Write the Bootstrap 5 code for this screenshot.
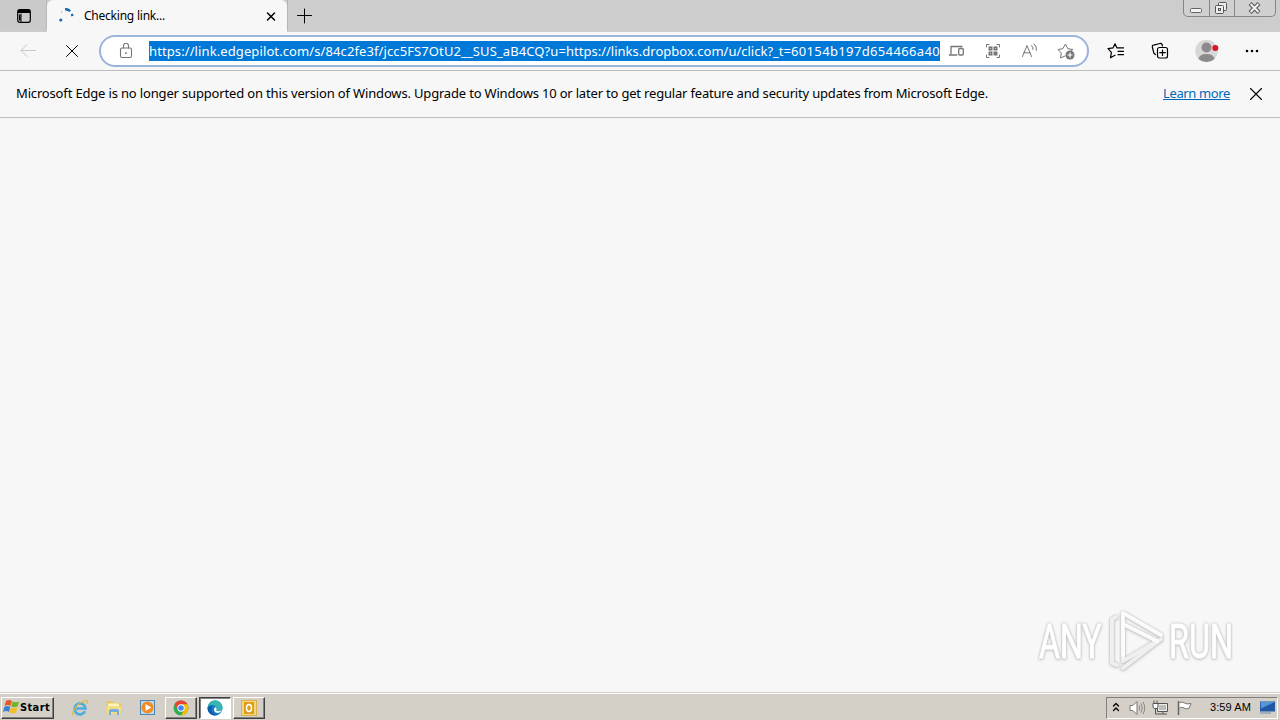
<!DOCTYPE html>
<html lang="en" data-bs-theme="light">
<head>
<meta charset="UTF-8">
<title>Checking link...</title>
<meta name="viewport" content="width=device-width, initial-scale=1.0">
<link href="https://cdn.jsdelivr.net/npm/bootstrap@5.3.2/dist/css/bootstrap.min.css" rel="stylesheet">
<style>
  html, body {height: 100%;}
  body {background: #f7f7f7;font-family: "Noto Sans", "Open Sans", sans-serif;font-size: 13px;line-height: 18px;color: #000;overflow: hidden;}
  svg {display: block;flex: none;}
  .ln {fill: none;stroke: currentColor;stroke-linecap: round;stroke-linejoin: round;}

  /* Tab strip */
  .tab-strip {height: 32px;background: #cdcdcd;}
  .tab-menu {width: 47px;height: 31px;padding-left: 16px;background: #cacaca;border-right: 1px solid #b9b9b9;border-bottom-right-radius: 5px;}
  .page-tab {width: 240px;height: 32px;padding: 0 9px 0 10px;background: #f7f7f7;border-radius: 6px 6px 0 0;}
  .tab-title {font-size: 12px;width: 181px;margin-left: 9px;}
  .tab-add {border-left: 1px solid #b5b5b5;padding: 0 9px;height: 31px;}
  .win-buttons {height: 17px;border: 1px solid #858585;border-top: 0;border-radius: 0 0 5px 5px;margin-right: 4px;background: #d0d0d0;overflow: hidden;}
  .win-buttons > div {height: 16px;border-right: 1px solid #858585;}
  .win-buttons > div:last-child {border-right: 0;}

  /* Toolbar */
  .tool-bar {height: 39px;border-bottom: 1px solid #bdbdbd;background: #f7f7f7;}
  .address {width: 990px;height: 32px;margin-left: 20px;padding-left: 18px;border: 2px solid #9bb4dc;border-radius: 16px;background: #fff;color: #757575;}
  .address-url {width: 791px;height: 20px;margin-left: 16px;background: #0078d7;color: #fff;line-height: 20px;}

  /* Notice */
  .notice {height: 47px;padding: 0 17px 0 16px;border-bottom: 1px solid #bdbdbd;background: #f7f7f7;}
  .notice-text {padding-bottom: 2px;}
  .notice a {color: #0067b8;}

  .mark-logo {position: absolute;right: 36px;bottom: 46px;overflow: visible;}
  .mark-logo g {filter: drop-shadow(0 0 1px #bbb) drop-shadow(0 1px 1px #d0d0d0);}

  /* Taskbar */
  .task-bar {height: 28px;background: #d4d0c8;border-top: 1px solid #d4d0c8;box-shadow: inset 0 1px #fff;padding: 2px 2px 0 1px;}
  .raised {border: 1px solid;border-color: #fff #404040 #404040 #fff;box-shadow: inset -1px -1px #808080;background: #d4d0c8;}
  .start {width: 53px;height: 22px;font: bold 11px/19px "DejaVu Sans Condensed", "DejaVu Sans", sans-serif;padding-left: 1px;}
  .task {width: 32px;height: 22px;}
  .task.pressed {border-color: #404040 #fff #fff #404040;box-shadow: inset 1px 1px #808080;background: #fff;}
  .tray {width: 172px;height: 22px;border: 1px solid;border-color: #808080 #fff #fff #808080;font: 11px/19px "Liberation Sans", sans-serif;padding-left: 5px;}
</style>
</head>
<body>
<div class="d-flex flex-column vh-100">

  <div class="tab-strip d-flex">
    <div class="tab-menu d-flex align-items-center">
      <svg width="16" height="16" viewBox="0 0 16 16"><rect class="ln" x="1.700" y="1.700" width="12.600" height="12.600" rx="2" stroke-width="1.200"/><path d="M2 2h12v3H2zM3 6.500h1.500v6H3z"/><path class="ln" d="M5 6v8"/></svg>
    </div>
    <div class="page-tab d-flex align-items-center">
      <svg width="18" height="18" viewBox="0 0 18 18"><path d="M8 2.300q3-.3 5.200 1.800" fill="none" stroke="#1667b0" stroke-width="2.300"/><path d="M14.800 6.800l.7 2.300" stroke="#1667b0" stroke-width="2.300"/><circle cx="3.800" cy="13" r="1.600" fill="#1667b0"/><circle cx="4.700" cy="5" r=".7" fill="#83aad0"/></svg>
      <span class="tab-title"><span data-width="81">Checking link...</span></span>
      <svg width="12" height="12" viewBox="0 0 12 12"><path class="ln" d="M2.500 3l7 7m0-7l-7 7" stroke-width="1.500"/></svg>
    </div>
    <div class="tab-add d-flex align-items-center">
      <svg width="16" height="16" viewBox="0 0 16 16"><path class="ln" d="M7.500 1v14M.5 7.500h14"/></svg>
    </div>
    <div class="win-buttons d-flex ms-auto">
      <div style="width:26px"><svg width="25" height="16"><rect x="6.500" y="8.500" width="11" height="4" rx="1" fill="#f3f3f3" stroke="#666"/></svg></div>
      <div style="width:25px"><svg width="24" height="16"><g fill="#eee" stroke="#555"><rect x="8.500" y="2.500" width="8" height="8" rx="1"/><rect x="5.500" y="5.500" width="8" height="8" rx="1"/><rect x="8.500" y="8.500" width="2" height="2"/></g></svg></div>
      <div style="width:40px"><svg width="40" height="16"><path d="M15 3.500l9 9m0-9l-9 9" stroke="#555" stroke-width="4"/><path d="M15.500 4l8 8m0-8l-8 8" stroke="#f2f2f2" stroke-width="2"/></svg></div>
    </div>
  </div>

  <div class="tool-bar d-flex align-items-center">
    <svg width="18" height="16" viewBox="0 0 18 16" style="margin-left:19px;color:#c8c8c8"><path class="ln" d="M16.500 7.500H2M8 1.500l-6 6 6 6"/></svg>
    <svg width="14" height="14" viewBox="0 0 14 14" style="margin-left:28px"><path class="ln" d="M1.500 1.500l11 11m0-11l-11 11"/></svg>
    <div class="address d-flex align-items-center">
      <svg width="14" height="16" viewBox="0 0 14 16"><g class="ln" stroke-width="1.100"><rect x="1.500" y="5" width="11" height="9.500" rx="1.500"/><path d="M4.500 5V2.800a2.500 2.500 0 0 1 5 0V5"/></g><circle cx="7" cy="10" r=".9" fill="currentColor"/></svg>
      <div class="address-url text-nowrap"><span data-width="417">https://link.edgepilot.com/s/84c2fe3f/jcc5FS7OtU2__SUS_aB4CQ?u=</span><span data-width="225">https://links.dropbox.com/u/click?_t=</span><span data-width="149">60154b197d654466a40</span></div>
      <svg width="17" height="14" viewBox="0 0 17 14" style="margin-left:8px"><g class="ln" stroke-width="1.300"><path d="M3 9.500v-7h11M1.300 11h7.500"/><rect x="10.700" y="4.500" width="4.600" height="6.500" rx="1"/></g></svg>
      <svg width="16" height="16" viewBox="0 0 16 16" style="margin-left:20px"><path class="ln" d="M1.500 4V1.500H4m8 0h2.500V4m0 8v2.500H12m-8 0H1.500V12"/><path d="M3.500 3.500h4v4h-4zM8.500 3.500h4v4h-4zM3.500 8.500h4v4h-4zM8.500 8.500h4v4h-4z" fill="currentColor"/><path d="M5 5h.8v.8H5zM10 5h.8v.8h-.8zM5 10h.8v.8H5z" fill="#fff"/></svg>
      <svg width="18" height="16" viewBox="0 0 18 16" style="margin-left:20px"><path class="ln" d="M1.500 13.500L6 2.500l4.500 11M3 9.800h6M10.500 2.500q1.800 1.500 1.500 4M13 .8q3 2.500 2.500 6.500"/></svg>
      <svg width="19" height="18" viewBox="0 0 19 18" style="margin-left:18px"><path class="ln" d="M8 14L3.500 16l.8-5L1 7.500l4.800-.8L8.500 2l2.300 4.700 5 .8-1.600 1.500"/><circle cx="13" cy="13" r="4.500" fill="currentColor"/><path d="M10.500 13h5M13 10.500v5" stroke="#fff" stroke-width="1.200"/></svg>
    </div>
    <svg width="18" height="16" viewBox="0 0 18 16" style="margin-left:18px"><path class="ln" d="M8 12.300L3.500 14.800l.9-5.500L1 5.700l5-.8L8 .8l2 4.100h6.500M11 8.300h5.500M11 11.700h5.500" stroke-width="1.200"/></svg>
    <svg width="18" height="18" viewBox="0 0 18 18" style="margin-left:26px"><g class="ln" stroke-width="1.200"><path d="M4.500 12.500l-1.500-1L1.300 5Q1 3.500 2.500 3.200L9 1.500q1.500-.3 2 1l.5 1.500"/><rect x="6.500" y="5.500" width="10" height="10.500" rx="2"/><path d="M11.500 8v5.500M8.800 10.700h5.500"/></g></svg>
    <svg width="24" height="24" viewBox="0 0 24 24" style="margin-left:26px"><circle cx="11.500" cy="12" r="11.300" fill="#d7d7d7"/><circle cx="11.500" cy="8.500" r="5" fill="#8c8a8a"/><path d="M3.500 20q1-5 8-5t8 5q-3.500 3-8 3t-8-3z" fill="#8c8a8a"/><circle cx="20.300" cy="9" r="3" fill="#dc1420"/></svg>
    <svg width="14" height="4" viewBox="0 0 14 4" style="margin-left:26px"><circle cx="2" cy="2" r="1.300"/><circle cx="7" cy="2" r="1.300"/><circle cx="12" cy="2" r="1.300"/></svg>
  </div>

  <div class="notice d-flex align-items-center text-nowrap">
    <span class="notice-text"><span data-width="398">Microsoft Edge is no longer supported on this version of Windows. </span><span data-width="574">Upgrade to Windows 10 or later to get regular feature and security updates from Microsoft Edge.</span></span>
    <a class="notice-text ms-auto" href="#"><span data-width="67">Learn more</span></a>
    <svg width="14" height="14" viewBox="0 0 14 14" style="margin-left:19px"><path class="ln" d="M1.500 1.500l11 11m0-11l-11 11" stroke-width="1.100"/></svg>
  </div>

  <main class="flex-grow-1"></main>

  <div class="task-bar d-flex align-items-center">
    <div class="start raised d-flex">
      <svg width="17" height="18" viewBox="0 0 17 18"><path d="M3 3q3-2 6 0L7.500 8q-3-2-6 0z" fill="#e8562a"/><path d="M9.700 3.500q3 1.500 6.500 0L14.500 8.500q-3 1.500-6.300 0z" fill="#70b52c"/><path d="M1.300 9q3-2 6 0L6 14q-3-2-6 0z" fill="#3c7fd0"/><path d="M8 9.500q3 1.500 6.300 0L13 14.500q-3 1.500-6.500 0z" fill="#f5bd22"/></svg>
      <span data-width="30">Start</span>
    </div>
    <svg width="18" height="18" viewBox="0 0 18 18" style="margin-left:17px"><path d="M14 12.200A5.500 5.500 0 1 1 14.500 9.500H5" fill="none" stroke="#4badde" stroke-width="2.700"/><path d="M3 16Q0 16 3 11 7 4 14 1.800 18 1 15.500 5" fill="none" stroke="#e4bc3c" stroke-width="1.200"/></svg>
    <svg width="18" height="18" viewBox="0 0 18 18" style="margin-left:16px"><path d="M1.500 2h6l1 2h8v10h-15z" fill="#e3c765"/><path d="M3 4.500h11v3H3z" fill="#fff4b8"/><path d="M1.500 7h15l-.5 8H2z" fill="#f3dc86"/><path d="M4 16v-4q0-2 2-2h6q2 0 2 2v4h-2v-3H6v3z" fill="#6fb0dc"/></svg>
    <svg width="18" height="18" viewBox="0 0 18 18" style="margin-left:16px"><rect x="1.500" y="1.500" width="14" height="14" fill="#b8dcf4" stroke="#4b87b8"/><circle cx="8.500" cy="8.500" r="6" fill="#f58a1f"/><path d="M6.500 5l6 3.500-6 3.500z" fill="#fff"/></svg>
    <div class="task raised d-flex align-items-center justify-content-center" style="margin-left:8px">
      <svg width="16" height="16" viewBox="0 0 16 16"><circle cx="8" cy="8" r="7.500" fill="#34a853"/><path d="M1.500 4.300A7.500 7.500 0 0 1 14.500 4.300H8L5 10z" fill="#ea4335"/><path d="M14.500 4.300A7.500 7.500 0 0 1 8 15.500l3.300-6L8 4.300z" fill="#fbbc05"/><circle cx="8" cy="8" r="3.700" fill="#fff"/><circle cx="8" cy="8" r="2.800" fill="#4285f4"/></svg>
    </div>
    <div class="task raised pressed d-flex align-items-center justify-content-center" style="margin-left:2px">
      <svg width="16" height="16" viewBox="0 0 16 16"><circle cx="8" cy="8" r="7.500" fill="#167bc8"/><path d="M.5 8A7.500 7.500 0 0 1 15.500 7.500Q15.500 11 11.500 11q-2.700 0-2-1.500Q10 5.500 6 5.200 2 5.200.5 8z" fill="#38b5b0"/><path d="M.5 8Q2 5 6 5.200q-2.500 2-1.500 5.300 1.500 4 6 4.600A7.500 7.500 0 0 1 .5 8z" fill="#0b5ca9"/><path d="M9.500 9.500q-1 1.700 2 1.700 1.500 0 3.500-1.200-1.500 3-4.500 3-3.500-.5-3.500-3.500 0-2 1.800-2.500Q9.700 8 9.500 9.500z" fill="#fff"/></svg>
    </div>
    <div class="task raised d-flex align-items-center justify-content-center" style="margin-left:2px">
      <svg width="16" height="16" viewBox="0 0 16 16"><rect x=".5" y=".5" width="15" height="15" fill="#f3d681" stroke="#dcb04a"/><rect x="3" y="2" width="10" height="12" fill="#dc9f16"/><ellipse cx="8" cy="8" rx="2.500" ry="3.500" fill="none" stroke="#fff" stroke-width="1.500"/></svg>
    </div>
    <div class="tray d-flex align-items-center ms-auto">
      <svg width="8" height="12" viewBox="0 0 8 12"><path class="ln" d="M1.500 4L4 1.500 6.500 4m-5 4.500L4 6l2.500 2.500" stroke-width="1.400"/></svg>
      <svg width="18" height="16" viewBox="0 0 18 16" style="margin-left:9px"><path d="M1 5.500h3l4-4v13l-4-4H1z" fill="#fff" stroke="#777"/><path d="M10 5.500q1.500 2.500 0 5M12 3.500q2.700 4.500 0 9M14 2q3.500 6 0 12" fill="none" stroke="#888"/></svg>
      <svg width="18" height="16" viewBox="0 0 18 16" style="margin-left:5px"><path d="M5.500 3.500h10v8h-10z" fill="#bdbdba" stroke="#555"/><path d="M6.500 4.500h8v6h-8z" fill="none" stroke="#eee"/><path d="M8 14h7M11 12v2M2 .5v3m3-3v3M3.500 8.500V14H8" fill="none" stroke="#555"/><path d="M1 3.500h5V7L5 8.500H2L1 7z" fill="#fff" stroke="#555"/></svg>
      <svg width="17" height="16" viewBox="0 0 17 16" style="margin-left:6px"><path d="M3.500 2.500q3-1 5 .5t6.500.5l-2 5q-3 1-5-.5t-4.500 0" fill="#fff" stroke="#777"/><path d="M2.500 1v14" stroke="#666" stroke-width="1.500"/></svg>
      <span data-width="41" style="margin-left:17px">3:59 AM</span>
      <svg class="ms-auto" width="17" height="16" viewBox="0 0 17 16"><path d="M0 1.500h15v10H0z" fill="#2158a6"/><path d="M.5 2h14L1 8.500z" fill="#5795d8"/><path d="M0 12.500h11v1H0z" fill="#6c8db8"/></svg>
    </div>
  </div>
</div>

<svg class="mark-logo" width="208" height="68" viewBox="1036 606 208 68">
  <defs>
    <linearGradient id="shine" x1="0" y1="622" x2="0" y2="660" gradientUnits="userSpaceOnUse">
      <stop offset=".45" stop-color="#fff"/><stop offset=".55" stop-color="#ebebeb"/>
    </linearGradient>
  </defs>
  <g font-family="Roboto, sans-serif" font-size="48" fill="url(#shine)" stroke="url(#shine)">
    <text transform="translate(1039 658) scale(.72 1)" textLength="87" lengthAdjust="spacingAndGlyphs">ANY</text>
    <text transform="translate(1169 658) scale(.72 1)" textLength="89" lengthAdjust="spacingAndGlyphs">RUN</text>
  </g>
  <g fill="none" stroke-width="4" stroke-linejoin="round" stroke-linecap="round">
    <path d="M1116 617l-4 2v44l5 2M1161 639l-38 29" stroke="#efefef"/>
    <path d="M1123 655v6l34-20" stroke="#efefef"/>
    <path d="M1123 655v-42l38 22M1125 625l32 16" stroke="#fbfbfb"/>
  </g>
</svg>

<script src="https://cdn.jsdelivr.net/npm/bootstrap@5.3.2/dist/js/bootstrap.bundle.min.js"></script>
<script>
  // Natural text widths follow the font, so spread the letters to a set length
  function fitText(el) {
    const range = document.createRange();
    range.selectNodeContents(el);
    const w = range.getBoundingClientRect().width;
    el.style.letterSpacing = (el.dataset.width - w) / el.textContent.length + 'px';
  }
  document.querySelectorAll('[data-width]').forEach(fitText);
</script>
</body>
</html>
